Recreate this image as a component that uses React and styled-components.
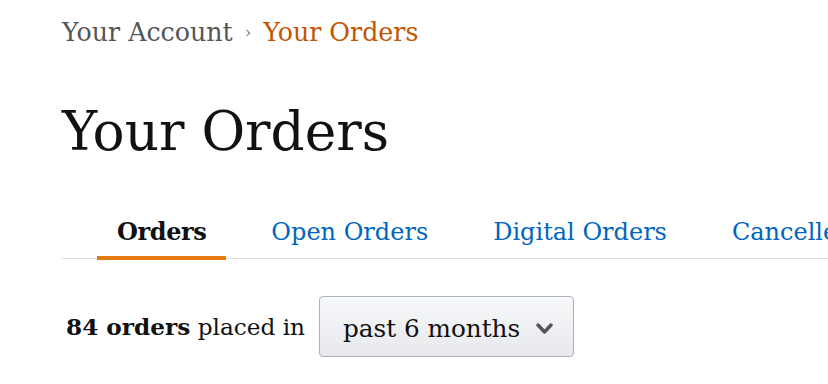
import React from "react";
import styled, { createGlobalStyle } from "styled-components";

const Global = createGlobalStyle`
  html, body { margin: 0; padding: 0; background: #fff; }
  body { font-family: "DejaVu Serif", "Liberation Serif", serif; color: #111; }
`;

const Page = styled.div`
  padding: 18px 0 0 62px;
  overflow: hidden;
  width: 828px;
  box-sizing: border-box;
`;

const Crumbs = styled.nav`
  display: flex;
  align-items: center;
  gap: 12px;
  font-size: 25.3px;
  line-height: 30px;
  white-space: nowrap;
`;

const Crumb = styled.span`
  color: ${(p) => (p.$active ? "#c45500" : "#555")};
`;

const Sep = styled.span`
  color: #777;
  font-size: 16px;
`;

const Title = styled.h1`
  margin: 54px 0 0;
  font-size: 53.3px;
  line-height: 60px;
  font-weight: 400;
  color: #111;
`;

const Tabs = styled.div`
  display: flex;
  gap: 25px;
  margin-top: 55px;
  padding-left: 35px;
  border-bottom: 1px solid #ddd;
  white-space: nowrap;
`;

const Tab = styled.div`
  padding: 0 20px 9px;
  font-size: 24px;
  line-height: 30px;
  font-weight: ${(p) => (p.$active ? 700 : 400)};
  letter-spacing: ${(p) => (p.$active ? "-0.4px" : "0")};
  color: ${(p) => (p.$active ? "#111" : "#0066c0")};
  border-bottom: 4px solid ${(p) => (p.$active ? "#e47911" : "transparent")};
  margin-bottom: -2px;
`;

const Filter = styled.div`
  display: flex;
  align-items: center;
  gap: 14px;
  margin-top: 37px;
  padding-left: 4px;
  font-size: 23.2px;
  white-space: nowrap;
`;

const Count = styled.span`
  b { font-weight: 700; }
`;

const Select = styled.div`
  display: flex;
  align-items: center;
  justify-content: space-between;
  box-sizing: border-box;
  width: 255px;
  height: 61px;
  padding: 4px 20px 0 23px;
  border: 1px solid #adb1b8;
  border-radius: 4px;
  background: linear-gradient(#f7f8fa, #e7e9ec);
  box-shadow: 0 1px 0 rgba(255,255,255,0.6) inset;
  font-size: 24.7px;
  color: #111;
`;

const Chevron = () => (
  <svg width="17" height="12" viewBox="0 0 17 12">
    <polyline points="2,2 8.5,9 15,2" fill="none" stroke="#555" strokeWidth="3.4" strokeLinecap="round" strokeLinejoin="round" />
  </svg>
);

export default function App() {
  return (
    <Page>
      <Global />
      <Crumbs>
        <Crumb>Your Account</Crumb>
        <Sep>›</Sep>
        <Crumb $active>Your Orders</Crumb>
      </Crumbs>
      <Title>Your Orders</Title>
      <Tabs>
        <Tab $active>Orders</Tab>
        <Tab>Open Orders</Tab>
        <Tab>Digital Orders</Tab>
        <Tab>Cancelled Orders</Tab>
      </Tabs>
      <Filter>
        <Count><b>84 orders</b> placed in</Count>
        <Select>
          <span>past 6 months</span>
          <Chevron />
        </Select>
      </Filter>
    </Page>
  );
}
